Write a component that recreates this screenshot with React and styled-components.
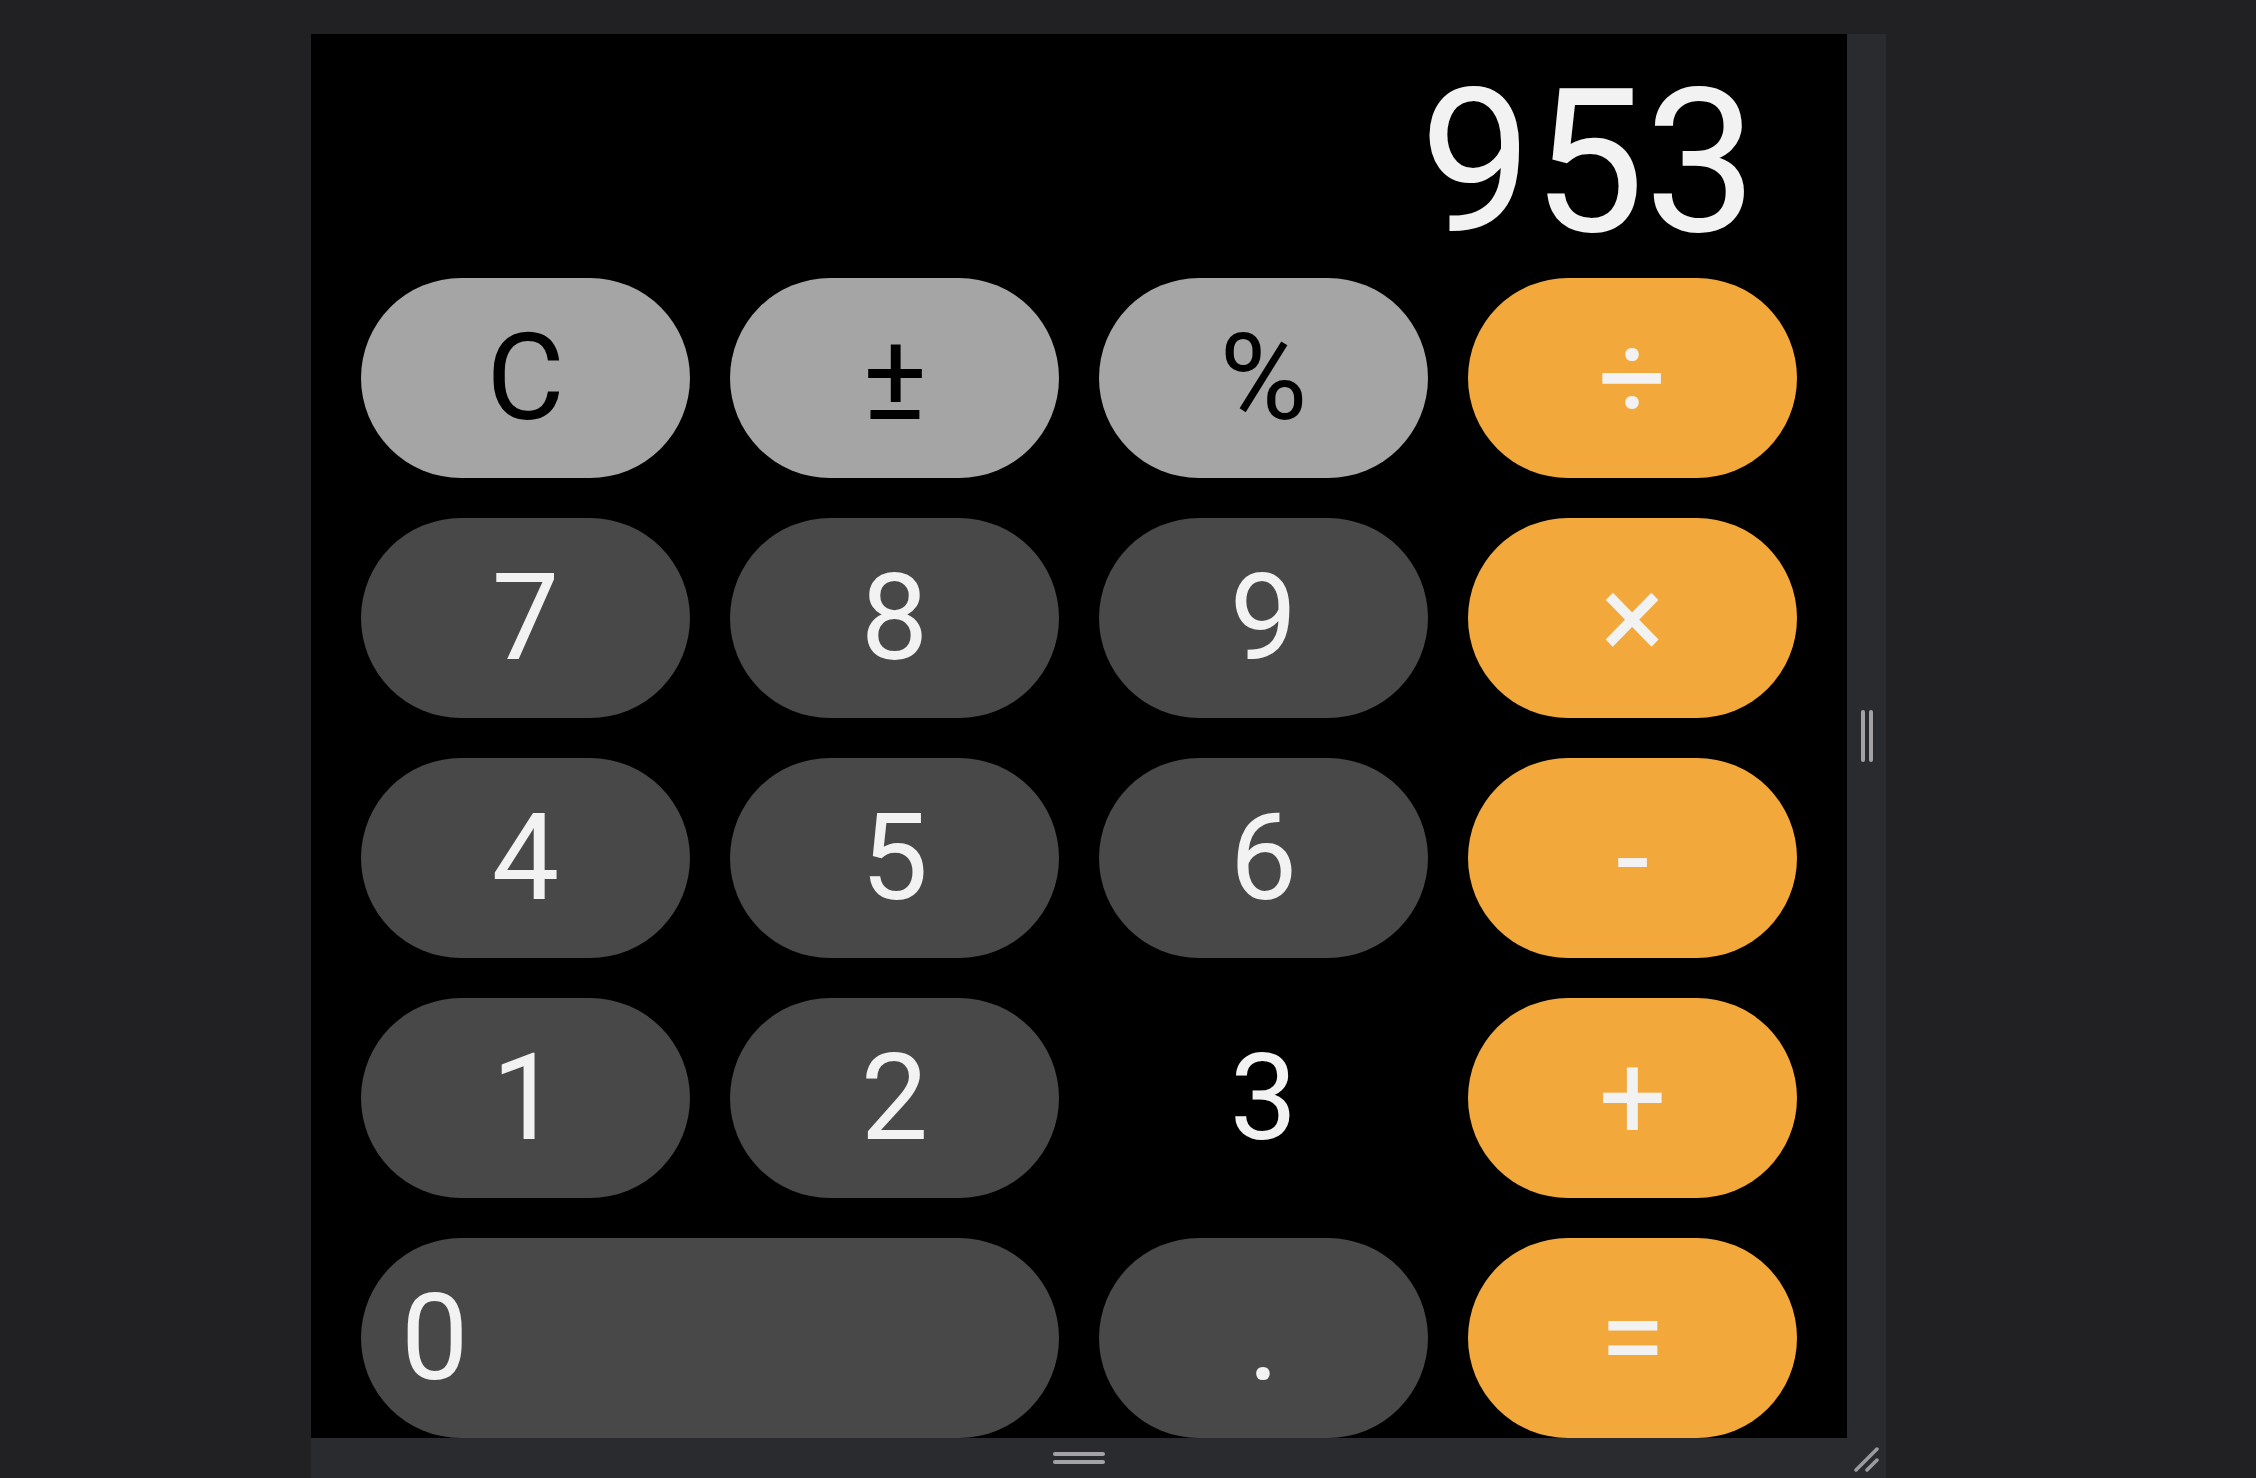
import React from 'react';
import styled, { createGlobalStyle, css } from 'styled-components';

const GlobalStyle = createGlobalStyle`
  html, body {
    margin: 0;
    padding: 0;
    background: #212123;
    overflow: hidden;
  }
  body {
    font-family: Roboto, "Liberation Sans", sans-serif;
  }
`;

const Page = styled.div`
  width: 2256px;
  height: 1478px;
  padding: 34px 0 0 311px;
  box-sizing: border-box;
`;

// preview frame: calculator panel with the resize strips right and below
const Frame = styled.div`
  display: grid;
  grid-template-columns: 1536px 39px;
  grid-template-rows: 1404px 40px;
  background: #2a2b2f;
  width: 1575px;
`;

const Panel = styled.div`
  background: #000;
  padding: 8px 50px 0;
  display: flex;
  flex-direction: column;
  overflow: hidden;
`;

const Display = styled.div`
  height: 236px;
  box-sizing: border-box;
  padding: 3px 40px 0 0;
  font-size: 200px;
  line-height: normal;
  color: #f2f2f2;
  text-align: right;
  white-space: nowrap;
`;

const Keypad = styled.div`
  display: grid;
  grid-template-columns: repeat(4, 329px);
  grid-auto-rows: 200px;
  gap: 40px;
`;

const tones = {
  fn: css`
    background: #a5a5a5;
    color: #000;
  `,
  num: css`
    background: #484848;
    color: #f2f2f2;
  `,
  op: css`
    background: #f2a83b;
    color: #f2f2f2;
  `,
  plain: css`
    background: transparent;
    color: #f2f2f2;
  `,
};

const Key = styled.button`
  border: none;
  border-radius: 100px;
  font-family: Roboto, "Liberation Sans", sans-serif;
  font-size: 120px;
  font-weight: 400;
  line-height: normal;
  padding: 0;
  display: flex;
  align-items: center;
  justify-content: center;
  cursor: pointer;
  ${({ $tone }) => tones[$tone]}
  ${({ $wide }) =>
    $wide &&
    css`
      grid-column: span 2;
      justify-content: flex-start;
      padding-left: 40px;
    `}
`;

const SideStrip = styled.div`
  display: flex;
  align-items: center;
  justify-content: center;
  gap: 4px;
`;

const VBar = styled.span`
  width: 4px;
  height: 52px;
  border-radius: 2px;
  background: #a3a3a5;
`;

const BottomStrip = styled.div`
  display: flex;
  flex-direction: column;
  align-items: center;
  justify-content: center;
  gap: 4px;
`;

const HBar = styled.span`
  width: 52px;
  height: 4px;
  border-radius: 2px;
  background: #a3a3a5;
`;

const Corner = styled.div`
  display: flex;
  align-items: flex-end;
  justify-content: flex-start;
  padding: 0 0 6px 6px;
`;

const keys = [
  ['C', 'fn'], ['±', 'fn'], ['%', 'fn'], ['÷', 'op'],
  ['7', 'num'], ['8', 'num'], ['9', 'num'], ['×', 'op'],
  ['4', 'num'], ['5', 'num'], ['6', 'num'], ['-', 'op'],
  ['1', 'num'], ['2', 'num'], ['3', 'plain'], ['+', 'op'],
  ['0', 'num', true], ['.', 'num'], ['=', 'op'],
];

export default function App() {
  return (
    <Page>
      <GlobalStyle />
      <Frame>
        <Panel>
          <Display>953</Display>
          <Keypad>
            {keys.map(([label, tone, wide]) => (
              <Key key={label} $tone={tone} $wide={wide}>
                {label}
              </Key>
            ))}
          </Keypad>
        </Panel>
        <SideStrip>
          <VBar />
          <VBar />
        </SideStrip>
        <BottomStrip>
          <HBar />
          <HBar />
        </BottomStrip>
        <Corner>
          <svg width="26" height="26" viewBox="0 0 26 26">
            <g stroke="#9c9c9e" strokeWidth="3.5" strokeLinecap="round">
              <line x1="3" y1="24" x2="24" y2="3" />
              <line x1="14" y1="24" x2="24" y2="14" />
            </g>
          </svg>
        </Corner>
      </Frame>
    </Page>
  );
}
